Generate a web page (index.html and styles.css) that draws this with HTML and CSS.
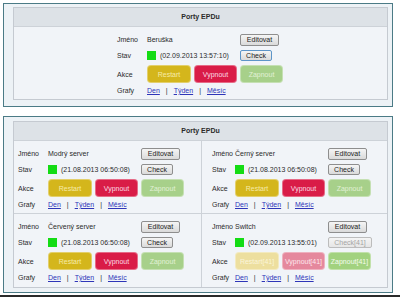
FILE: index.html
```html
<!DOCTYPE html>
<html lang="cs">
<head>
<meta charset="utf-8">
<title>Porty EPDu</title>
<link rel="stylesheet" href="styles.css">
</head>
<body>
<div class="frame frame-one">
  <div class="panel">
    <div class="panel-head">Porty EPDu</div>
    <div class="single">
      <div class="port">
        <span class="lbl">Jméno</span><span class="val">Beruška</span><button class="btn edit">Editovat</button>
        <span class="lbl">Stav</span><span class="val"><i class="led"></i>(02.09.2013 13:57:10)</span><button class="btn check focused">Check</button>
        <span class="lbl">Akce</span>
        <div class="actions"><button class="act restart">Restart</button><button class="act off">Vypnout</button><button class="act on">Zapnout</button></div>
        <span class="lbl">Grafy</span>
        <div class="links"><a href="#">Den</a><span>|</span><a href="#">Týden</a><span>|</span><a href="#">Měsíc</a></div>
      </div>
    </div>
  </div>
</div>

<div class="frame frame-two">
  <div class="panel">
    <div class="panel-head">Porty EPDu</div>
    <div class="grid">
      <div class="cell cell-left">
        <div class="port">
          <span class="lbl">Jméno</span><span class="val">Modrý server</span><button class="btn edit">Editovat</button>
          <span class="lbl">Stav</span><span class="val"><i class="led"></i>(21.08.2013 06:50:08)</span><button class="btn check">Check</button>
          <span class="lbl">Akce</span>
          <div class="actions"><button class="act restart">Restart</button><button class="act off">Vypnout</button><button class="act on">Zapnout</button></div>
          <span class="lbl">Grafy</span>
          <div class="links"><a href="#">Den</a><span>|</span><a href="#">Týden</a><span>|</span><a href="#">Měsíc</a></div>
        </div>
      </div>
      <div class="cell cell-right">
        <div class="port port-tight">
          <span class="lbl">Jméno</span><span class="val">Černý server</span><button class="btn edit">Editovat</button>
          <span class="lbl">Stav</span><span class="val"><i class="led"></i>(21.08.2013 06:50:08)</span><button class="btn check">Check</button>
          <span class="lbl">Akce</span>
          <div class="actions"><button class="act restart">Restart</button><button class="act off">Vypnout</button><button class="act on">Zapnout</button></div>
          <span class="lbl">Grafy</span>
          <div class="links"><a href="#">Den</a><span>|</span><a href="#">Týden</a><span>|</span><a href="#">Měsíc</a></div>
        </div>
      </div>
      <div class="cell cell-left cell-bottom">
        <div class="port">
          <span class="lbl">Jméno</span><span class="val">Červený server</span><button class="btn edit">Editovat</button>
          <span class="lbl">Stav</span><span class="val"><i class="led"></i>(21.08.2013 06:50:08)</span><button class="btn check">Check</button>
          <span class="lbl">Akce</span>
          <div class="actions"><button class="act restart">Restart</button><button class="act off">Vypnout</button><button class="act on">Zapnout</button></div>
          <span class="lbl">Grafy</span>
          <div class="links"><a href="#">Den</a><span>|</span><a href="#">Týden</a><span>|</span><a href="#">Měsíc</a></div>
        </div>
      </div>
      <div class="cell cell-right cell-bottom">
        <div class="port port-tight">
          <span class="lbl">Jméno</span><span class="val">Switch</span><button class="btn edit">Editovat</button>
          <span class="lbl">Stav</span><span class="val"><i class="led"></i>(02.09.2013 13:55:01)</span><button class="btn check wide" disabled>Check[41]</button>
          <span class="lbl">Akce</span>
          <div class="actions"><button class="act restart dim" disabled>Restart[41]</button><button class="act off dim" disabled>Vypnout[41]</button><button class="act on dim" disabled>Zapnout[41]</button></div>
          <span class="lbl">Grafy</span>
          <div class="links"><a href="#">Den</a><span>|</span><a href="#">Týden</a><span>|</span><a href="#">Měsíc</a></div>
        </div>
      </div>
    </div>
  </div>
</div>
<div class="base"></div>
</body>
</html>
```

FILE: styles.css
```css
html, body {
  margin: 0;
  padding: 0;
  background: #ffffff;
}

body {
  width: 400px;
  height: 298px;
  overflow: hidden;
  font-family: "Liberation Sans", Arial, sans-serif;
  font-size: 7px;
  color: #2b2b2b;
}

.frame {
  box-sizing: border-box;
  width: 390px;
  margin-left: 3px;
  border: 1px solid #4b7b86;
  background: #edf2f6;
  padding: 3px 4px 6px 9px;
}

.frame-one {
  margin-top: 3px;
}

.frame-two {
  margin-top: 9px;
  padding: 4px 4px 4px 9px;
}

.panel {
  border: 1px solid #c5cad1;
  background: #f1f4f8;
}

.panel-head {
  height: 18px;
  line-height: 18px;
  border-bottom: 1px solid #cdd2d8;
  background: #dde2e7;
  text-align: center;
  font-weight: bold;
  color: #2b2b2b;
}

.single {
  display: flex;
  justify-content: center;
  padding: 5px 0 4px;
}

.port {
  display: grid;
  grid-template-columns: 30px 93px 44px;
  grid-template-rows: 15px 16px 22px 10px;
  align-items: center;
}

.port-tight {
  grid-template-columns: 23px 93px 44px;
}

.lbl {
  color: #2b2b2b;
  white-space: nowrap;
}

.val {
  display: flex;
  align-items: center;
  gap: 4px;
  white-space: nowrap;
  color: #2b2b2b;
}

.led {
  display: block;
  width: 9px;
  height: 9px;
  background: #14dc14;
}

.btn {
  box-sizing: border-box;
  height: 12px;
  padding: 0;
  border: 1px solid #8e8e8e;
  border-radius: 2px;
  background: linear-gradient(#f5f5f5, #dadada);
  font-family: inherit;
  font-size: 7px;
  line-height: 10px;
  color: #222222;
}

.edit {
  width: 39px;
}

.check {
  width: 32px;
  height: 11px;
  line-height: 9px;
}

.check.focused {
  border-color: #5d95c8;
}

.check.wide {
  width: 44px;
  color: #a5a5a5;
  border-color: #bcbcbc;
  background: linear-gradient(#f4f4f4, #e6e6e6);
}

.actions {
  grid-column: 2 / 4;
  display: flex;
  gap: 3px;
}

.act {
  box-sizing: border-box;
  width: 43px;
  height: 18px;
  padding: 0;
  border: 1px solid rgba(255, 255, 255, 0.35);
  border-radius: 4px;
  font-family: inherit;
  font-size: 7px;
  white-space: nowrap;
}

.act.restart {
  width: 44px;
  background: #d4b61c;
  color: #f6eba8;
}

.act.off {
  background: #d91c47;
  color: #fbdbe3;
}

.act.on {
  background: #a7d08a;
  color: #e2f1d6;
}

.act.restart.dim {
  background: #eddf9f;
  color: #fbf5da;
}

.act.off.dim {
  background: #e5889d;
  color: #fde6ec;
}

.act.on.dim {
  background: #a2d27f;
  color: #f4fbee;
}

.links {
  grid-column: 2 / 4;
  display: flex;
  gap: 6px;
  white-space: nowrap;
}

.links a {
  color: #2e35b8;
  text-decoration: underline;
}

.links span {
  color: #2b2b2b;
}

.grid {
  display: grid;
  grid-template-columns: 188px 1fr;
}

.cell {
  padding: 5px 0 4px 4px;
  border-bottom: 1px solid #cdd2d8;
}

.cell-left {
  border-right: 1px solid #cdd2d8;
}

.cell-right {
  padding-left: 10px;
}

.cell-bottom {
  border-bottom: none;
  padding-bottom: 5px;
}

.base {
  height: 2px;
  margin-top: 2px;
  background: #2a2a2a;
}
```
